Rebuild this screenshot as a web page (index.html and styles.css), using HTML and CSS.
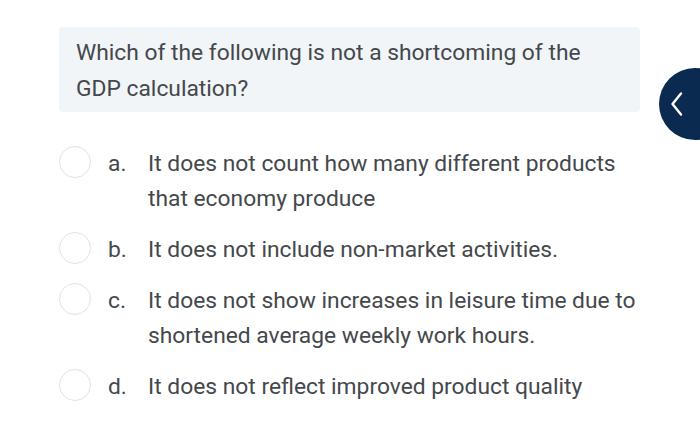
FILE: index.html
```html
<!DOCTYPE html>
<html>
<head>
<meta charset="utf-8">
<link rel="stylesheet" href="styles.css">
</head>
<body>
<div class="page">
  <div class="question">Which of the following is not a shortcoming of the GDP calculation?</div>
  <ul class="options">
    <li class="option"><span class="radio"></span><span class="letter">a.</span><span class="text">It does not count how many different products that economy produce</span></li>
    <li class="option"><span class="radio"></span><span class="letter">b.</span><span class="text">It does not include non-market activities.</span></li>
    <li class="option"><span class="radio"></span><span class="letter">c.</span><span class="text">It does not show increases in leisure time due to shortened average weekly work hours.</span></li>
    <li class="option"><span class="radio"></span><span class="letter">d.</span><span class="text">It does not reflect improved product quality</span></li>
  </ul>
  <button class="nav-btn" aria-label="Back">
    <svg width="16" height="26" viewBox="0 0 16 26"><path d="M11 2.5 L2.5 13 L11 23.5" fill="none" stroke="#fff" stroke-width="2.4" stroke-linecap="round" stroke-linejoin="round"/></svg>
  </button>
</div>
</body>
</html>
```
FILE: styles.css
```css
html, body {
  margin: 0;
  padding: 0;
  background: #fff;
}
.page {
  position: relative;
  width: 700px;
  height: 432px;
  overflow: hidden;
  font-family: Roboto, "Noto Sans", sans-serif;
  color: #44484c;
  font-size: 22.8px;
}
.question {
  margin: 27px 0 0 59px;
  width: 581px;
  box-sizing: border-box;
  padding: 8px 40px 5px 17px;
  line-height: 36px;
  background: #f1f5f8;
  border-radius: 4px;
  height: 85px;
}
.options {
  list-style: none;
  margin: 34px 0 0 0;
  padding: 0;
}
.option {
  display: flex;
  align-items: flex-start;
  line-height: 35px;
  margin-bottom: 16px;
  padding-left: 59px;
}
.radio {
  flex: none;
  width: 32px;
  height: 32px;
  box-sizing: border-box;
  border: 1.5px solid #e3e3e3;
  border-radius: 50%;
  margin-top: 0;
}
.letter {
  flex: none;
  width: 40px;
  margin-left: 17px;
}
.text {
  width: 500px;
}
.nav-btn {
  position: absolute;
  left: 659px;
  top: 68px;
  width: 72px;
  height: 72px;
  border-radius: 50%;
  border: none;
  background: #0b2a50;
  display: flex;
  align-items: center;
  justify-content: flex-start;
  padding: 0 0 0 11px;
  box-sizing: border-box;
}
.nav-btn svg {
  display: block;
}
```
